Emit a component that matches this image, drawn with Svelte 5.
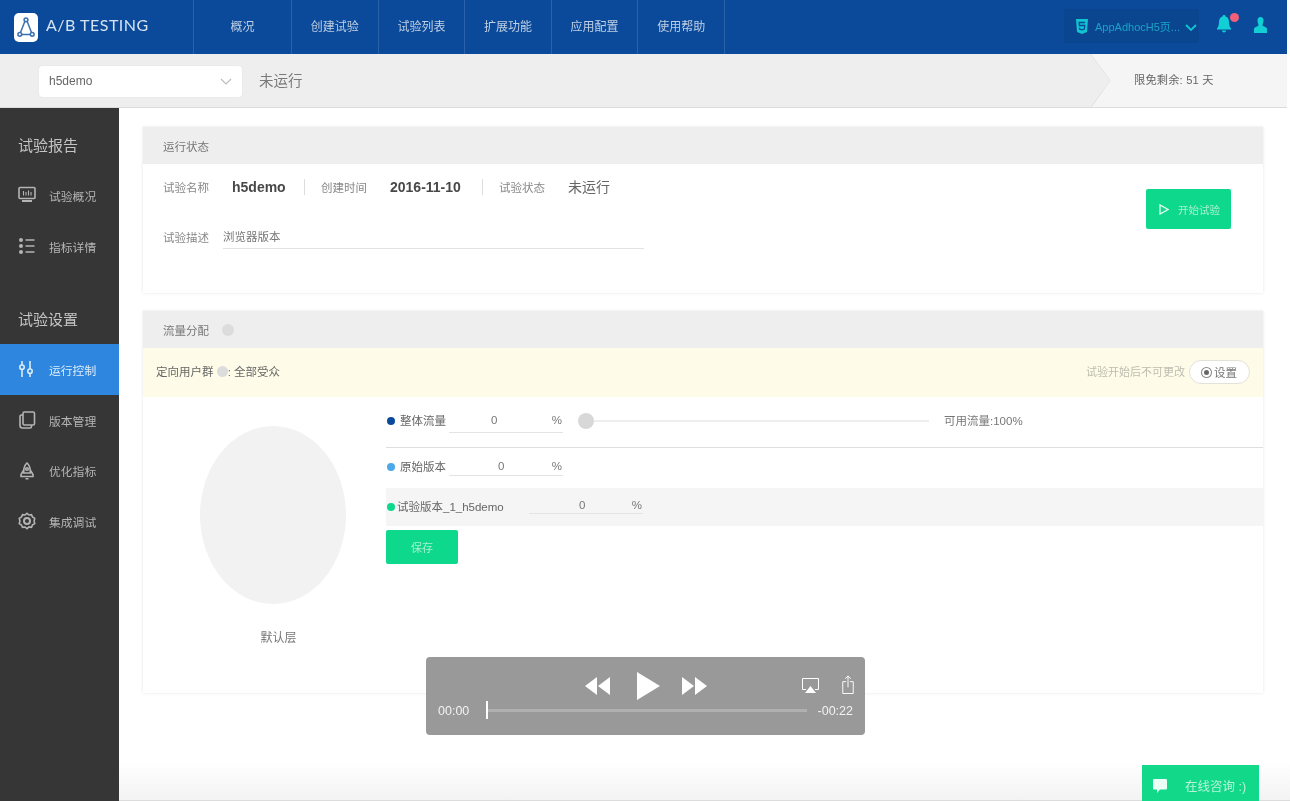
<script>
	const navItems = ['概况', '创建试验', '试验列表', '扩展功能', '应用配置', '使用帮助'];
	const reportItems = [
		{ label: '试验概况', icon: 'monitor' },
		{ label: '指标详情', icon: 'list' }
	];
	const settingItems = [
		{ label: '运行控制', icon: 'sliders', active: true },
		{ label: '版本管理', icon: 'copy' },
		{ label: '优化指标', icon: 'rocket' },
		{ label: '集成调试', icon: 'gear' }
	];
</script>

{#snippet sideIcon(name)}
	<svg class="side-icon" viewBox="0 0 18 18" fill="none" stroke="currentColor" stroke-width="1.6">
		{#if name === 'monitor'}
			<rect x="1" y="1.5" width="16" height="11" rx="1" />
			<path d="M5.5 5v4.500M8 6v3.500M10.500 4.500v5M13 6v3.500" stroke-width="1.1" />
			<path d="M4 15h10" stroke-width="2" />
		{:else if name === 'list'}
			<circle cx="3" cy="3" r="2" fill="currentColor" stroke="none" />
			<circle cx="3" cy="9" r="2" fill="currentColor" stroke="none" />
			<circle cx="3" cy="15" r="2" fill="currentColor" stroke="none" />
			<path d="M7.500 3h9M7.500 9h9M7.500 15h9" />
		{:else if name === 'sliders'}
			<path d="M4 1v4M4 9.500V17M12 1v8M12 13.500V17" />
			<circle cx="4" cy="7.200" r="2.200" />
			<circle cx="12" cy="11.200" r="2.200" />
		{:else if name === 'copy'}
			<rect x="5" y="1" width="11.500" height="13" rx="1.500" />
			<path d="M5 4H3.500A1.500 1.500 0 0 0 2 5.500v9A2.500 2.500 0 0 0 4.500 17H12a1.500 1.500 0 0 0 1.500-1.500V14" />
		{:else if name === 'rocket'}
			<path d="M9 1c2.800 2.500 3.600 5.500 3.200 10H5.800C5.400 6.500 6.200 3.500 9 1z" />
			<path d="M5.800 8 3 12.500v2h12v-2L12.200 8M7.500 16.800h3" />
			<circle cx="9" cy="7" r="1.300" />
		{:else}
			<path d="M9 1.300 11 3l2.500-.4 1 2.400 2.200 1.300-.6 2.700.6 2.600-2.200 1.300-1 2.400-2.500-.4L9 16.700 7 15l-2.500.4-1-2.400-2.200-1.300.6-2.700-.6-2.600L3.500 5l1-2.400L7 3z" />
			<circle cx="9" cy="9" r="3" stroke-width="2" />
		{/if}
	</svg>
{/snippet}

<div class="app">
	<header class="topbar">
		<div class="brand">
			<span class="logo">
				<svg viewBox="0 0 24 29" fill="none" stroke="#3a70b0" stroke-width="1.500">
					<path d="M10.800 8.500 6.500 19.500M13.200 8.500l4.300 11M7.500 21.500h9" />
					<circle cx="12" cy="6.800" r="1.900" />
					<circle cx="5.800" cy="21.300" r="1.900" />
					<circle cx="18.200" cy="21.300" r="1.900" />
				</svg>
			</span>
			<span class="brand-name">A/B TESTING</span>
		</div>
		<nav class="nav">
			{#each navItems as item}
				<a class="nav-item">{item}</a>
			{/each}
		</nav>
		<div class="top-right">
			<div class="app-switch">
				<svg class="shield" viewBox="0 0 12 15">
					<path fill="#12c4cf" d="M0 0h12l-1 13-5 2-5-2z" />
					<path fill="none" stroke="#0b4a9b" stroke-width="1.300" d="M9 3.500H3.200l.2 3h5.300l-.3 3.600-2.400.8-2.400-.8-.1-1.400" />
				</svg>
				<span>AppAdhocH5页...</span>
				<svg class="caret" viewBox="0 0 12 7" fill="none" stroke="#12c4cf" stroke-width="1.800"><path d="m1 1 5 5 5-5" /></svg>
			</div>
			<span class="bell">
				<svg viewBox="0 0 14 18"><path fill="#12cfd6" d="M7 0c1 0 1.500.7 1.500 1.500C11 2.300 12 4.500 12 7c0 3 .6 5 2 6.500V14.500H0v-1C1.400 12 2 10 2 7c0-2.500 1-4.700 3.500-5.500C5.500.7 6 0 7 0zM5 15.500h4a2 2 0 0 1-4 0z" /></svg>
				<i class="badge"></i>
			</span>
			<svg class="user" viewBox="0 0 13 16"><path fill="#12cfd6" d="M6.500 0C8.500 0 9.500 1.500 9.500 3.500S8.500 7 8.500 8.500c1 .9 3.500 1.500 4.500 3V16H0v-4.500c1-1.500 3.500-2.100 4.500-3C4.500 7 3.500 5.500 3.500 3.500S4.500 0 6.500 0z" /></svg>
		</div>
	</header>

	<div class="subbar">
		<div class="select">
			<span>h5demo</span>
			<svg viewBox="0 0 12 7" fill="none" stroke="#bbb" stroke-width="1.100"><path d="m1 1 5 5 5-5" /></svg>
		</div>
		<span class="sub-status">未运行</span>
		<div class="trial">
			<svg class="notch" viewBox="0 0 21 54" fill="none" stroke="#ddd"><path d="M.5 0 20 26.500.5 54" /></svg>
			<span>限免剩余: 51 天</span>
		</div>
	</div>

	<div class="body">
		<aside class="sidebar">
			<h3 class="side-title">试验报告</h3>
			{#each reportItems as item}
				<div class="side-item">
					{@render sideIcon(item.icon)}
					<span>{item.label}</span>
				</div>
			{/each}
			<h3 class="side-title second">试验设置</h3>
			{#each settingItems as item}
				<div class="side-item" class:active={item.active}>
					{@render sideIcon(item.icon)}
					<span>{item.label}</span>
				</div>
			{/each}
		</aside>

		<main class="main">
			<section class="card">
				<div class="card-head">运行状态</div>
				<div class="status-body">
					<div class="status-info">
						<div class="info-row">
							<span class="label">试验名称</span>
							<strong class="name-value">h5demo</strong>
							<i class="sep"></i>
							<span class="label">创建时间</span>
							<strong class="date-value">2016-11-10</strong>
							<i class="sep"></i>
							<span class="label">试验状态</span>
							<span class="state-value">未运行</span>
						</div>
						<div class="desc-row">
							<span class="desc-label">试验描述</span>
							<span class="desc-value">浏览器版本</span>
						</div>
					</div>
					<button class="start-btn">
						<svg viewBox="0 0 10 11" fill="none" stroke="#e4fff4" stroke-width="1.300"><path d="M1 1v9l8-4.500z" /></svg>
						开始试验
					</button>
				</div>
			</section>

			<section class="card traffic">
				<div class="card-head">流量分配 <i class="help big"></i></div>
				<div class="notice">
					<span class="audience">定向用户群 <i class="help"></i>: 全部受众</span>
					<span class="locked">试验开始后不可更改</span>
					<button class="set-btn"><i class="radio"></i>设置</button>
				</div>
				<div class="traffic-body">
					<div class="chart">
						<div class="pie"></div>
						<span>默认层</span>
					</div>
					<div class="allocations">
						<div class="alloc whole">
							<i class="dot navy"></i>
							<span class="alloc-name">整体流量</span>
							<div class="pct"><span>0</span><span>%</span></div>
							<div class="slider"><i class="thumb"></i></div>
							<span class="avail">可用流量:100%</span>
						</div>
						<div class="alloc origin">
							<i class="dot sky"></i>
							<span class="alloc-name">原始版本</span>
							<div class="pct"><span>0</span><span>%</span></div>
						</div>
						<div class="alloc variant">
							<i class="dot green"></i>
							<span class="variant-name">试验版本_1_h5demo</span>
							<div class="pct"><span>0</span><span>%</span></div>
						</div>
						<button class="save-btn">保存</button>
					</div>
				</div>
			</section>
		</main>
	</div>

	<div class="player">
		<div class="player-top">
			<div class="transport">
				<svg class="skip" viewBox="0 0 25 18" fill="#fff"><path d="M12 0v18L0 9zM25 0v18L13 9z" /></svg>
				<svg class="play" viewBox="0 0 23 28" fill="#fff"><path d="M0 0l23 14L0 28z" /></svg>
				<svg class="skip" viewBox="0 0 25 18" fill="#fff"><path d="M0 0v18l12-9zM13 0v18l12-9z" /></svg>
			</div>
			<svg class="airplay" viewBox="0 0 17 15" fill="none" stroke="#fff"><path d="M4 11.500H.5V.5h16v11H13" /><path fill="#fff" stroke="none" d="M8.500 8 14 15H3z" /></svg>
			<svg class="share" viewBox="0 0 12 20" fill="none" stroke="#fff"><path d="M4 7H.5v12.500h11V7H8M6 13V1M3 4l3-3 3 3" /></svg>
		</div>
		<div class="player-bottom">
			<span>00:00</span>
			<div class="scrub"><i></i></div>
			<span>-00:22</span>
		</div>
	</div>

	<div class="chat">
		<svg viewBox="0 0 14 14"><path fill="#eafff6" d="M1 0h12a1 1 0 0 1 1 1v8.500a1 1 0 0 1-1 1H7L4 14v-3.500H1a1 1 0 0 1-1-1V1a1 1 0 0 1 1-1z" /></svg>
		<span>在线咨询 :)</span>
	</div>
</div>

<style>
	:global(body) {
		margin: 0;
		background: #fff;
	}

	.app {
		position: relative;
		width: 1290px;
		height: 801px;
		overflow: hidden;
		display: flex;
		flex-direction: column;
		font-family: 'Liberation Sans', 'Noto Sans CJK SC', sans-serif;
		font-size: 12px;
		color: #666;
		background: #fff;
		filter: blur(0.45px);
	}

	/* faint fade and line along the bottom edge of the capture */
	.app::after {
		content: '';
		position: absolute;
		left: 119px;
		right: 0;
		bottom: 0;
		height: 40px;
		background: linear-gradient(rgba(243, 243, 243, 0), rgba(243, 243, 243, 1));
		border-bottom: 1px solid #dcdcdc;
		box-sizing: border-box;
	}

	.topbar {
		flex: none;
		height: 54px;
		margin-right: 3px;
		display: flex;
		align-items: stretch;
		background: #0b4a9b;
	}

	.brand {
		width: 193px;
		display: flex;
		align-items: center;
		padding-left: 14px;
		box-sizing: border-box;
	}

	.logo {
		width: 24px;
		height: 29px;
		margin-right: 8px;
		background: #fff;
		border-radius: 5px;
		display: block;
	}

	.logo svg {
		display: block;
		width: 24px;
		height: 29px;
	}

	.brand-name {
		font-family: Lato, 'Liberation Sans', sans-serif;
		font-size: 16px;
		letter-spacing: 0.5px;
		color: #d5e2ef;
		margin-top: -5px;
	}

	.nav {
		display: flex;
		border-left: 1px solid #2a62aa;
	}

	.nav-item {
		width: 86.6px;
		display: flex;
		align-items: center;
		justify-content: center;
		border-right: 1px solid #2a62aa;
		color: #c0d0e4;
		padding-bottom: 3px;
		box-sizing: border-box;
	}

	.nav-item:first-child {
		width: 98px;
	}

	.top-right {
		margin-left: auto;
		display: flex;
		align-items: center;
	}

	.app-switch {
		height: 34px;
		padding-left: 12px;
		margin-top: -2px;
		width: 135px;
		box-sizing: border-box;
		display: flex;
		align-items: center;
		background: #0a4590;
		color: #1aa3c4;
		font-size: 11px;
		white-space: nowrap;
	}

	.shield {
		width: 12px;
		height: 15px;
		margin-right: 7px;
		flex: none;
	}

	.caret {
		width: 12px;
		height: 7px;
		flex: none;
		margin-left: 5px;
		margin-top: 3px;
	}

	.bell {
		position: relative;
		margin-left: 18px;
		margin-top: -6px;
		width: 14px;
		height: 18px;
	}

	.bell svg {
		display: block;
		width: 14px;
		height: 18px;
	}

	.badge {
		position: absolute;
		top: -2px;
		left: 13px;
		width: 9px;
		height: 9px;
		border-radius: 50%;
		background: #f0607a;
	}

	.user {
		width: 13px;
		height: 16px;
		margin: -4px 20px 0 23px;
	}

	.subbar {
		flex: none;
		height: 54px;
		margin-right: 3px;
		box-sizing: border-box;
		display: flex;
		align-items: center;
		padding-left: 39px;
		background: #eeeeee;
		border-bottom: 1px solid #ddd;
	}

	.select {
		width: 203px;
		height: 31px;
		box-sizing: border-box;
		padding: 0 10px;
		display: flex;
		align-items: center;
		justify-content: space-between;
		background: #fff;
		border-radius: 3px;
		box-shadow: 0 0 1px #ccc;
		color: #666;
		margin-top: 1px;
	}

	.select svg {
		width: 12px;
		height: 7px;
	}

	.sub-status {
		margin: -2px 0 0 17px;
		font-size: 14.5px;
		color: #7a7a7a;
	}

	.trial {
		position: relative;
		margin-left: auto;
		width: 197px;
		height: 100%;
		box-sizing: border-box;
		padding: 0 0 3px 44px;
		display: flex;
		align-items: center;
		background: #f5f5f5;
		clip-path: polygon(0 0, 100% 0, 100% 100%, 0 100%, 20px 50%);
		color: #666;
		font-size: 11.2px;
		letter-spacing: 0.2px;
	}

	.notch {
		position: absolute;
		left: 0;
		top: 0;
		width: 21px;
		height: 54px;
	}

	.body {
		flex: 1;
		display: flex;
		min-height: 0;
	}

	.sidebar {
		width: 119px;
		flex: none;
		background: #363636;
		padding-top: 13px;
		box-sizing: border-box;
		color: #b4b4b4;
		font-size: 11.8px;
	}

	.side-title {
		margin: 0;
		height: 49px;
		line-height: 50px;
		padding-left: 18px;
		font-size: 15px;
		font-weight: 400;
		color: #c4c4c4;
	}

	.side-title.second {
		margin-top: 23.6px;
	}

	.side-item {
		height: 50.7px;
		display: flex;
		align-items: center;
		padding-left: 18px;
		box-sizing: border-box;
	}

	.side-item span {
		margin-left: 13px;
	}

	.side-item.active {
		background: #2e86de;
		color: #dcecfb;
	}

	.side-icon {
		width: 18px;
		height: 18px;
		flex: none;
	}

	.main {
		flex: 1;
		padding: 19px 27px 0 24px;
		min-width: 0;
	}

	.card {
		background: #fff;
		box-shadow: 0 0 3px #e4e4e4;
	}

	.card-head {
		height: 37px;
		display: flex;
		align-items: center;
		padding-left: 20px;
		background: #eeeeee;
		color: #777;
		font-size: 11.5px;
	}

	.status-body {
		height: 129px;
		position: relative;
		display: flex;
		justify-content: space-between;
		padding: 0 32px 0 20px;
	}

	.status-info {
		padding-top: 13px;
	}

	.info-row {
		display: flex;
		align-items: center;
		height: 20px;
	}

	.label,
	.desc-label {
		width: 69px;
		flex: none;
		color: #888;
		font-size: 11.5px;
	}

	.desc-label {
		width: auto;
		margin-top: -2px;
	}

	.name-value {
		width: 72px;
		color: #484848;
		font-size: 14px;
	}

	.date-value {
		width: 92px;
		color: #484848;
		font-size: 14px;
	}

	.state-value {
		font-size: 14px;
		color: #666;
		margin-top: -2px;
	}

	.sep {
		width: 1px;
		height: 16px;
		background: #ddd;
		margin-right: 16px;
	}

	.desc-row {
		display: flex;
		align-items: center;
		margin-top: 29px;
	}

	.desc-value {
		width: 421px;
		margin-left: 14px;
		padding: 2px 0 4px;
		font-size: 11.5px;
		border-bottom: 1px solid #e2e2e2;
		color: #777;
	}

	.start-btn {
		margin-top: 25px;
		width: 85px;
		height: 40px;
		border: none;
		border-radius: 2px;
		background: #0ed88b;
		color: #a6f0d0;
		font: inherit;
		font-size: 10.5px;
		display: flex;
		align-items: center;
		justify-content: center;
		gap: 9px;
		padding: 0 0 0 2px;
	}

	.start-btn svg {
		width: 10px;
		height: 11px;
	}

	.traffic {
		margin-top: 18px;
		height: 382px;
	}

	.help {
		display: inline-block;
		width: 11px;
		height: 11px;
		border-radius: 50%;
		background: #dcdcdc;
		vertical-align: -1px;
	}

	.help.big {
		width: 12px;
		height: 12px;
		margin-left: 13px;
	}

	.notice {
		height: 49px;
		box-sizing: border-box;
		display: flex;
		align-items: center;
		padding: 0 13px 3px;
		background: #fefce8;
	}

	.audience {
		color: #666;
		font-size: 11.5px;
	}

	.locked {
		margin-left: auto;
		margin-right: 4px;
		color: #bdbdb0;
		font-size: 11px;
	}

	.set-btn {
		width: 61px;
		height: 24px;
		padding: 0;
		border: 1px solid #e2e2d8;
		border-radius: 12px;
		background: #fff;
		font: inherit;
		font-size: 11.5px;
		color: #777;
		display: flex;
		align-items: center;
		justify-content: center;
		gap: 3px;
		margin-top: 2px;
	}

	.radio {
		width: 5px;
		height: 5px;
		background: #666;
		border-radius: 50%;
		border: 2px solid #fff;
		box-shadow: 0 0 0 1px #888;
	}

	.traffic-body {
		display: flex;
		height: 296px;
	}

	.chart {
		width: 243px;
		flex: none;
		display: flex;
		flex-direction: column;
		align-items: center;
		padding-top: 29px;
		box-sizing: border-box;
		color: #777;
	}

	.pie {
		width: 146px;
		height: 178px;
		border-radius: 50%;
		background: #f2f2f2;
		margin-bottom: 24px;
		margin-left: 17px;
	}

	.chart span {
		margin-left: 28px;
	}

	.allocations {
		flex: 1;
		min-width: 0;
	}

	.alloc {
		display: flex;
		align-items: center;
		color: #666;
		font-size: 11.5px;
		box-sizing: border-box;
	}

	.whole {
		height: 51px;
		border-bottom: 1px solid #dedede;
		padding-bottom: 4px;
	}

	.origin {
		height: 40px;
		padding-bottom: 4px;
	}

	.variant {
		height: 38px;
		padding-bottom: 3px;
		background: #f5f5f5;
	}

	.dot {
		width: 8px;
		height: 8px;
		border-radius: 50%;
		flex: none;
		margin: 2px 0 0 1px;
	}

	.navy {
		background: #0b4a9b;
	}

	.sky {
		background: #4aa9e9;
	}

	.green {
		background: #0ed88b;
	}

	.alloc-name {
		margin-left: 5px;
		width: 49px;
		flex: none;
	}

	.variant-name {
		margin-left: 2px;
		width: 132px;
		flex: none;
	}

	.pct {
		width: 114px;
		height: 26px;
		flex: none;
		box-sizing: border-box;
		display: flex;
		align-items: center;
		justify-content: space-between;
		padding: 0 1px 0 42px;
		border-bottom: 1px solid #e4e4e4;
		color: #777;
	}

	.origin .pct {
		height: 19px;
		padding-left: 49px;
	}

	.variant .pct {
		height: 17px;
		padding-left: 50px;
	}

	.slider {
		position: relative;
		width: 351px;
		height: 2px;
		margin: 2px 0 0 15px;
		background: #eee;
		flex: none;
	}

	.thumb {
		position: absolute;
		left: 0;
		top: -7px;
		width: 16px;
		height: 16px;
		border-radius: 50%;
		background: #d8d8d8;
	}

	.avail {
		margin-left: 15px;
		color: #777;
	}

	.save-btn {
		display: block;
		margin-top: 4px;
		width: 72px;
		height: 34px;
		border: none;
		border-radius: 2px;
		background: #0ed88b;
		color: #a6f0d0;
		font: inherit;
		font-size: 11px;
		padding: 0;
	}

	/* video controls sit over the page */
	.player {
		position: absolute;
		left: 426px;
		top: 657px;
		width: 439px;
		height: 78px;
		box-sizing: border-box;
		padding: 0 12px;
		border-radius: 4px;
		background: #999999;
		color: #f2f2f2;
		font-size: 12.5px;
	}

	.player-top {
		position: relative;
		height: 45px;
		padding-top: 15px;
		box-sizing: border-box;
	}

	.transport {
		width: 100%;
		display: flex;
		justify-content: center;
		align-items: center;
		box-sizing: border-box;
		height: 28px;
	}

	.skip {
		width: 25px;
		height: 18px;
	}

	.play {
		width: 23px;
		height: 28px;
		margin: 0 22px 0 27px;
	}

	.airplay {
		position: absolute;
		left: 364px;
		top: 21px;
		width: 17px;
		height: 15px;
	}

	.share {
		position: absolute;
		left: 404px;
		top: 18px;
		width: 12px;
		height: 19px;
	}

	.player-bottom {
		display: flex;
		align-items: center;
		justify-content: space-between;
		height: 17px;
	}

	.scrub {
		position: relative;
		width: 321px;
		height: 3px;
		margin: 0 8px 0 14px;
		background: #b0b0b0;
	}

	.scrub i {
		position: absolute;
		left: 0;
		top: -8px;
		width: 2px;
		height: 18px;
		background: #fff;
	}

	.chat {
		position: absolute;
		z-index: 1;
		left: 1142px;
		bottom: 0;
		width: 117px;
		height: 36px;
		box-sizing: border-box;
		padding: 5px 0 0 11px;
		display: flex;
		align-items: center;
		background: #12d98a;
		color: #b6f3d9;
		font-size: 12.5px;
	}

	.chat svg {
		width: 14px;
		height: 14px;
		margin-right: 18px;
	}
</style>
